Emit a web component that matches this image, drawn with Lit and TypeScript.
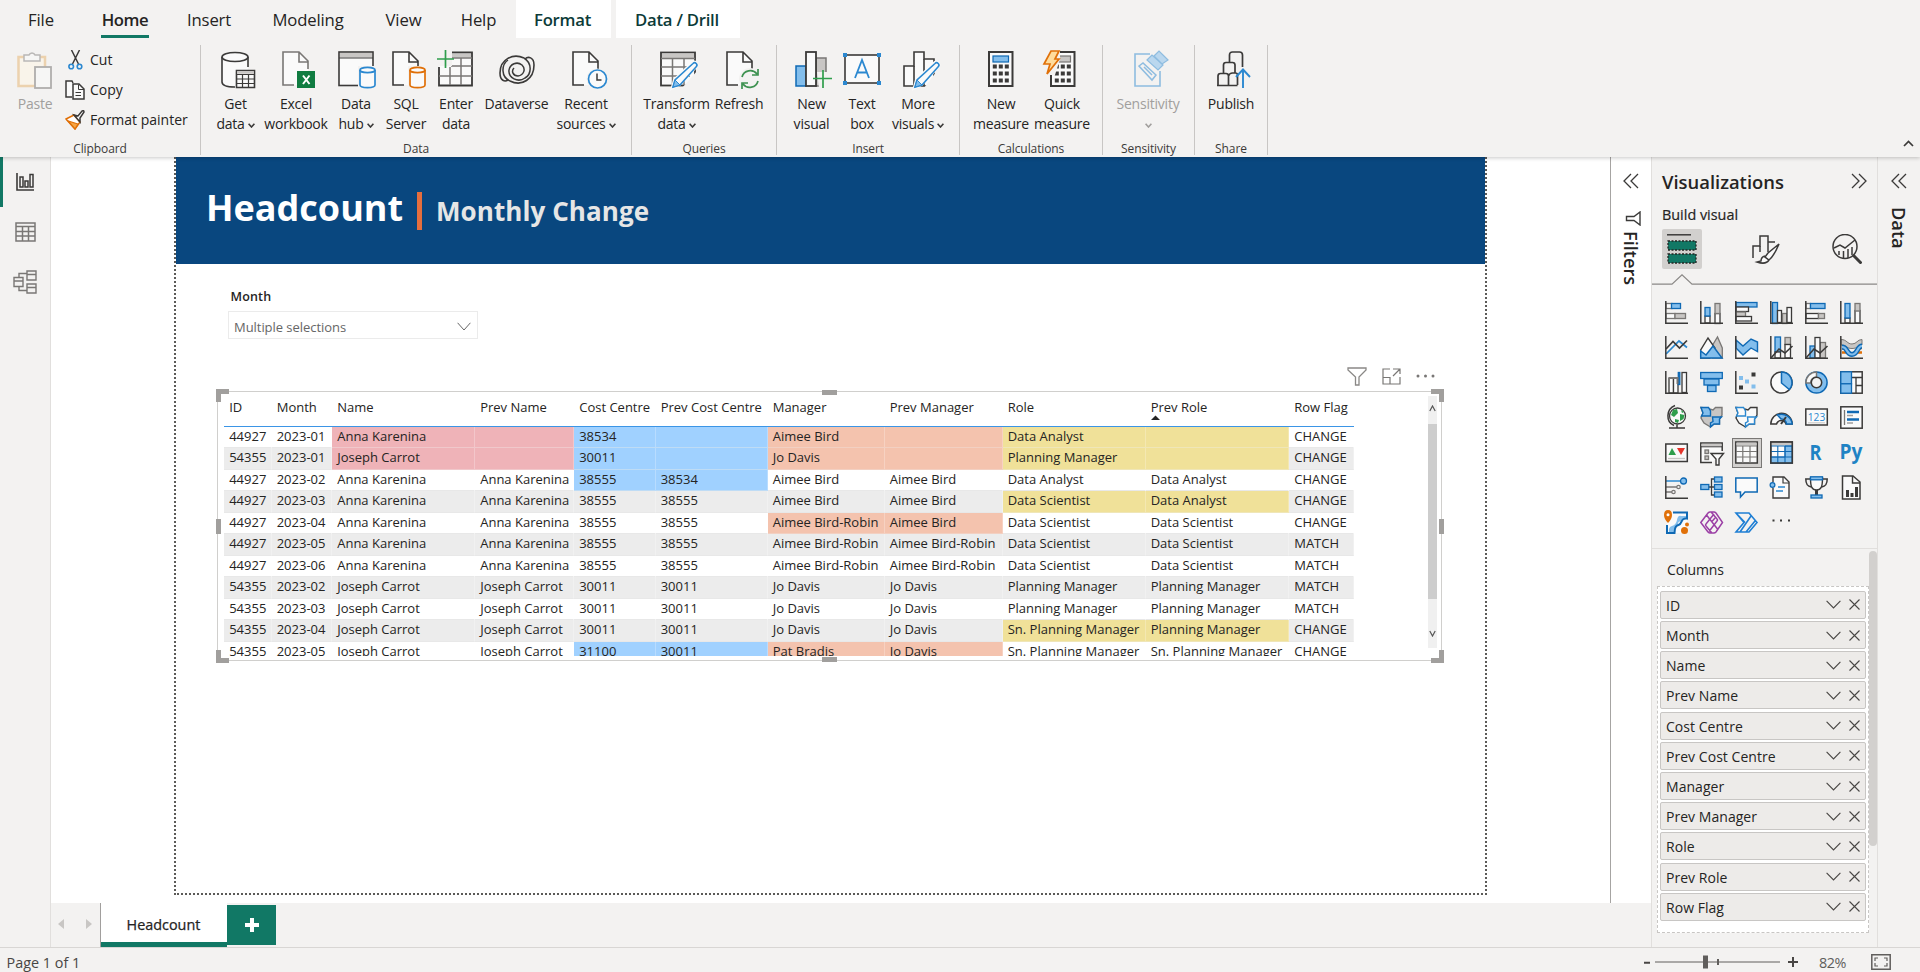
import { LitElement, html, css, svg, TemplateResult } from "lit";
import { customElement } from "lit/decorators.js";
import { classMap } from "lit/directives/class-map.js";
import { styleMap } from "lit/directives/style-map.js";

const D = "#3b3a39";
const B = "#0f69b4";
const BF = "#83beec";
const G = "#797775";
const GF = "#c8c6c4";
const W = "#fafafa";
const LB = "#2b88d0";

type Part = TemplateResult<2>;
const icon = (w: number, h: number, body: Part, vb = `0 0 ${w} ${h}`) =>
  html`<svg width=${w} height=${h} viewBox=${vb} fill="none">${body}</svg>`;

const page = (c = D) => svg`<path d="M1 1H17L26 10V34H1Z" fill="${W}"/><path d="M12 34H1V1H17L26 10V18M17 1V11H26" stroke="${c}" stroke-width="1.6"/>`;
const pencil = svg`<path d="M13 36l2-7L33 12a2.2 2.2 0 0 1 3 3L19 33Z" fill="${W}" stroke="${W}" stroke-width="4"/><path d="M13 36l2-7L33 12.500a2.200 2.200 0 0 1 3.200 3.200L20 34Z" fill="${W}" stroke="${LB}" stroke-width="1.600"/><path d="M13 36l2-7 5 5Z" fill="${BF}" stroke="${LB}"/>`;
const calc = (x: number, c: string, f: string) => svg`<rect x="${x}" y="1" width="23.500" height="34" fill="${W}" stroke="${D}" stroke-width="2"/><rect x="${x + 4}" y="5" width="15.500" height="6" fill="${f}" stroke="${c}" stroke-width="1.200"/>${[13.5, 20.5, 27.5].map(y => [4, 10, 16].map(dx => svg`<rect x="${x + dx - 0.2}" y="${y}" width="4" height="4" fill="${D}"/>`))}`;

const big: Record<string, Part> = {
  paste: svg`<g opacity=".55"><path d="M7 6H1.500V35H19V18H28V6H22" fill="#fff6e6" stroke="#e8b878" stroke-width="2.500"/><path d="M7 4h5a3.200 3.200 0 0 1 6 0h5v6H7Z" fill="${W}" stroke="#8a8886" stroke-width="1.500"/><rect x="18" y="16" width="16" height="21" fill="${W}" stroke="#797775" stroke-width="1.800"/></g>`,
  getdata: svg`<path d="M2 6v25c0 3 6 5 13 5V21h13V6" fill="${W}"/><path d="M15 36C7 36 2 34 2 31V6M28 6V16" stroke="${D}" stroke-width="1.600"/><ellipse cx="15" cy="6" rx="13" ry="4.500" fill="${W}" stroke="${D}" stroke-width="1.600"/><path d="M16.500 19.500H34.500V36.500H16.500Z" fill="${W}" stroke="${D}" stroke-width="1.600"/><path d="M17 21.500H34" stroke="${GF}" stroke-width="2.500"/><path d="M16.500 23.500H34.500M16.500 28H34.500M16.500 32.500H34.500M22.500 23V36M28.500 23V36" stroke="${D}" stroke-width="1.200"/>`,
  excel: svg`<g transform="translate(3 0)">${page(G)}</g><rect x="18" y="20" width="18" height="17" fill="#107c41"/><path d="M24 24.500l6.500 8.500M30.500 24.500l-6.500 8.500" stroke="#fff" stroke-width="2"/>`,
  hub: svg`<rect x="1" y="1" width="34" height="33.500" fill="${W}" stroke="${D}" stroke-width="1.600"/><rect x="2" y="2" width="32" height="4.500" fill="${GF}"/><path d="M1 7H35" stroke="${D}"/><path d="M20 15H38V38H20Z" fill="#f3f2f1"/><path d="M22 19V34c0 3.500 15 3.500 15 0V19" fill="${W}" stroke="${LB}" stroke-width="1.700"/><ellipse cx="29.500" cy="19" rx="7.500" ry="2.700" fill="${W}" stroke="${LB}" stroke-width="1.700"/>`,
  sql: svg`<g transform="translate(1 0)">${page()}</g><path d="M17 15H36V38H17Z" fill="#f3f2f1"/><path d="M19 19V34c0 3.500 15 3.500 15 0V19" fill="${W}" stroke="#e07008" stroke-width="1.700"/><ellipse cx="26.500" cy="19" rx="7.500" ry="2.700" fill="${W}" stroke="#e07008" stroke-width="1.700"/>`,
  enter: svg`<rect x="2" y="2" width="33" height="32.500" fill="${W}"/><path d="M14 1.500H35V34.500H2V16" stroke="${D}" stroke-width="1.800"/><path d="M14 4.500H34" stroke="${GF}" stroke-width="4"/><path d="M14 7H35M14 15H35M2 25H35M13 16V34M24 7V34" stroke="${G}" stroke-width="1.500"/><path d="M0 0H15V15H0Z" fill="#f3f2f1"/><path d="M0 8H17M8.500 -1V17" stroke="#2f9e4c" stroke-width="1.700"/>`,
  dataverse: svg`<path d="M26 7C15 2 2 8 2 22c0 8 5 9 8 7M12 30C24 36 36 28 36 14c0-8-6-9-9-6" stroke="${D}" stroke-width="1.600"/><path d="M26 7c8 5 8 16 1 20-7 5-17 0-16-8 1-6 8-9 13-5 4 4 2 10-4 11-5 0-7-5-4-8M12 30C3 26 3 14 10 9" stroke="${D}" stroke-width="1.500"/>`,
  recent: svg`<g transform="translate(2 0)">${page()}</g><circle cx="27" cy="28" r="10.500" fill="#f3f2f1"/><circle cx="27.500" cy="28" r="9" fill="${W}" stroke="${LB}" stroke-width="1.700"/><path d="M27 22.500V29H31.500" stroke="${D}" stroke-width="1.500"/>`,
  transform: svg`<rect x="1" y="1.500" width="34" height="33" fill="${W}" stroke="${D}" stroke-width="1.800"/><rect x="2" y="2.500" width="32" height="4.500" fill="${GF}"/><path d="M1 7.500H35M1 16H35M1 25H30M12.500 8V34M24 8V34" stroke="${G}" stroke-width="1.500"/><path d="M22 37L37 20V37Z" fill="#f3f2f1"/>${pencil}`,
  refresh: svg`<g transform="translate(2 0)">${page()}</g><circle cx="26" cy="28" r="11" fill="#f3f2f1"/><path d="M18 26a8.500 8.500 0 0 1 15-3M34 30a8.500 8.500 0 0 1-15 3M34 18V24H28M18 38V32H24" stroke="#3d9150" stroke-width="1.700"/>`,
  newvis: svg`<rect x="1" y="15" width="10" height="20" fill="${BF}" stroke="${B}" stroke-width="1.500"/><rect x="21" y="7" width="10" height="28" fill="${GF}" stroke="${G}" stroke-width="1.500"/><rect x="11" y="1" width="10" height="34" fill="${W}" stroke="${D}" stroke-width="1.800"/><path d="M22 21H37V37H24Z" fill="#f3f2f1"/><path d="M18 27.500H37M28 19V37" stroke="#2f9e4c" stroke-width="1.700"/>`,
  textbox: svg`<rect x="2" y="4" width="34" height="28" fill="${W}" stroke="${D}" stroke-width="1.600"/><path d="M12 27L19 9L26 27M14.500 21.500H23.500" stroke="${LB}" stroke-width="1.800"/>${[[0, 2], [34, 2], [0, 30], [34, 30]].map(([x, y]) => svg`<rect x="${x}" y="${y}" width="4" height="4" fill="${LB}"/>`)}`,
  morevis: svg`<path d="M1 35V15H11V1H21V8H31V35Z" fill="${W}" stroke="${D}" stroke-width="1.600"/><path d="M11 15V35M21 8V35" stroke="${D}" stroke-width="1.600"/><path d="M21 37L34 20V37Z" fill="#f3f2f1"/><g transform="translate(-1 0)">${pencil}</g>`,
  calc: calc(7, B, BF),
  quick: svg`${calc(8, G, GF)}<path d="M-1 0H17V8L12 24H-1Z" fill="#f3f2f1"/><path d="M8 0H16L12 8H16L4 23L7 13H1Z" fill="#ffdc9c" stroke="#e07008" stroke-width="1.700"/>`,
  sens: svg`<g opacity=".5"><path d="M20 3H5V35H30V20" stroke="${LB}" stroke-width="1.600"/><path d="M9 15l4-3 13 12-4 5Z M14 16l8 8" stroke="${LB}" stroke-width="1.500"/><path d="M17 9l5-5 11 10-5 5ZM24 5l5-5 9 9-6 4Z" fill="${BF}" stroke="${LB}" stroke-width="1.200"/></g>`,
  publish: svg`<path d="M1 34.500V25q0-2.500 2.500-2.500H9q2.500 0 2.500 2.500V34.500M6.500 22V14q0-2.500 2.500-2.500h6.500q2.500 0 2.500 2.500V22M12.500 11V4q0-3 3-3h7q3 0 3 3V16M0 34.500H20.500M11.500 25q1-3 4-3h3q2 0 2 2V34" stroke="${D}" stroke-width="1.700"/><path d="M26 37V19M19 26l7-7.500 7 7.500" stroke="${LB}" stroke-width="1.900"/>`,
};

const axis = svg`<path d="M.8 0V22.200H23" stroke="${D}" stroke-width="1.500"/>`;
const r = (x: number, y: number, w: number, h: number, f: string, s: string, sw = 1.3) =>
  svg`<rect x="${x}" y="${y}" width="${w}" height="${h}" fill="${f}" stroke="${s}" stroke-width="${sw}"/>`;
const map = (a: string, b: string, sa: string, sb: string) => svg`<path d="M1 1.500L6 2L13 4L15.500 1.500H22V9L19.500 13V18L14 18L10.500 21L4 17L1 12L3 7Z" fill="${b}" stroke="${sb}" stroke-width="1.400"/><path d="M1 1.500H8.500L10.500 5V10H1.500L3 7Z M12.500 11H21.500L19.500 13V18L14 18L10.500 21V17L13 15.500Z" fill="${a}" stroke="${sa}" stroke-width="1.400"/>`;

const viz: Part[] = [
  svg`${r(1, 2.5, 6, 5, W, G)}${r(6.5, 2.5, 9, 5, BF, B)}${r(1, 12.5, 9, 5, W, G)}${r(10, 12.500, 10.500, 5, GF, G)}${axis}`,
  svg`${r(5, 15, 5, 7, W, D)}${r(5, 6.5, 5, 8.5, BF, B)}${r(15, 12.5, 5, 10, W, D)}${r(15, 2.5, 5, 10, GF, G)}${axis}`,
  svg`${r(1, 1.5, 21, 4.500, BF, B)}${r(1, 6, 12.500, 4.500, W, D)}${r(1, 11, 9.500, 4.500, GF, G)}${r(1, 15.5, 15.500, 4.500, W, D)}${axis}`,
  svg`${r(2.500, 1.500, 5, 21, BF, B)}${r(7.500, 9.500, 4, 12, W, D)}${r(12.500, 12.500, 4.500, 10, GF, G)}${r(17, 6.500, 4.500, 15, W, D)}${axis}`,
  svg`${r(1, 2.5, 4.500, 5, W, G)}${r(5.5, 2.5, 14.500, 5, BF, B)}${r(1, 12.5, 12.500, 5, W, D)}${r(13.500, 12.500, 6, 5, GF, G)}${axis}`,
  svg`${r(5, 17, 5, 5, W, D)}${r(5, 2.5, 5, 14.500, BF, B)}${r(15, 9.5, 5, 12.500, W, D)}${r(15, 2.5, 5, 7.500, GF, G)}${axis}`,
  svg`<path d="M1 18L14 5l8 6.500" stroke="${LB}" stroke-width="1.700"/><path d="M1 13l7-7.500 6.500 6.500L22 4.500" stroke="${D}" stroke-width="1.700"/>${axis}`,
  svg`<path d="M12 10L17.500 1L22.300 12V22H12Z" fill="${GF}" stroke="${G}" stroke-width="1.300"/><path d="M.7 22V14L8 2L15 12L10 22Z" fill="${W}" stroke="${D}" stroke-width="1.400"/><path d="M.7 22V15L6 19L13 10L22 22Z" fill="${BF}" stroke="${B}" stroke-width="1.500"/>`,
  svg`<path d="M1 13l5 5 9-8 7 4V22H1Z" fill="${W}"/><path d="M1 4l7 6 8-7L22.500 6V15.500L16 12 8 19 1 12Z" fill="${BF}" stroke="${B}" stroke-width="1.400"/>${axis}`,
  svg`${r(5, 1, 5.500, 15, BF, B)}${r(5, 16, 5.500, 6, W, D)}${r(15, 1.500, 5.500, 7, GF, G)}${r(15, 8.500, 5.500, 13.500, W, D)}<path d="M1 22l8-9 6 4 7.500-7" stroke="${D}" stroke-width="1.600"/>${axis}`,
  svg`${r(5, 10, 5, 12, BF, B)}${r(15, 6.500, 5.500, 15.500, GF, G)}${r(10, 1.500, 5, 20.500, W, D)}<path d="M1 22l8-9 6 4 7.500-7" stroke="${D}" stroke-width="1.600"/>${axis}`,
  svg`<path d="M2 12.500H6.500M2 16.500H7M16 16.500H22M17 12H22" stroke="#e07008" stroke-width="2.500"/><path d="M1 3.500c6 0 6 4.500 11 4.500s5-4.500 10-4.500V9c-5 0-4 3.500-10 3.500S7 9 1 9Z" fill="${GF}" stroke="${G}"/><path d="M2 11c6 0 4 7.500 10 7.500S17 10 22 10" stroke="${B}" stroke-width="5"/><path d="M2 11c6 0 4 7.500 10 7.500S17 10 22 10" stroke="${BF}" stroke-width="2.200"/>${axis}`,
  svg`${r(4, 7, 4.500, 15, W, D)}${r(8.500, 7, 4, 7, "#8a8886", "#8a8886", 0)}${r(8.500, 7, 4.500, 15, W, D)}${r(13.300, 1.500, 1.500, 12, B, B)}${r(17, 1.500, 4.500, 20, W, D)}<path d="M4 7H12.500V13" stroke="${G}" stroke-width="2"/>${axis}`,
  svg`${r(.7, 1.500, 21.600, 6, BF, B)}${r(4, 8, 15, 6, BF, B)}${r(7.500, 14.500, 8.500, 6, BF, B)}`,
  svg`${r(4.500, 5.500, 3, 3, BF, BF, 1)}${r(10.500, 9, 3, 3, BF, BF, 1)}${r(17, 14, 3, 3, BF, BF, 1)}${r(17, 2, 3, 3, D, D, 1)}${r(4.500, 15, 3, 3, D, D, 1)}${axis}`,
  svg`<circle cx="11.500" cy="11.500" r="10.600" fill="${W}" stroke="${D}" stroke-width="1.500"/><path d="M11.500 .9a10.600 10.600 0 0 1 7.800 17.600L11.500 12Z" fill="${BF}" stroke="${B}" stroke-width="1.500"/>`,
  svg`<circle cx="11.500" cy="11.500" r="10.600" fill="${BF}" stroke="${B}" stroke-width="1.500"/><path d="M11.500 .9A10.600 10.600 0 0 0 .9 12H5.500a6 6 0 0 1 6-6Z" fill="${W}" stroke="${G}" stroke-width="1.500"/><circle cx="11.500" cy="11.500" r="5.200" fill="#f3f2f1" stroke="${D}" stroke-width="1.500"/>`,
  svg`${r(.8, .8, 21.400, 21.400, W, D, 1.500)}<path d="M11.500 6.500H22M16 6.500V22M16 14.500H22" stroke="${D}" stroke-width="1.300"/>${r(.8, .8, 10.700, 12, BF, B)}${r(.8, 12.800, 10.700, 9.400, BF, B)}`,
  svg`<circle cx="12.500" cy="10" r="8" fill="${W}" stroke="${D}" stroke-width="1.300"/><path d="M8 4l4-1 1 4-4 4-3-2ZM15 8l4.500 1-1 4-3.500 2ZM10 13l4 1-1 3-3-1Z M16 4l3 2-2 1Z" fill="#2f9e4c"/><path d="M10 -.5C1 3 .5 16 9 19.500M4 22H20M12 18.500V22" stroke="${D}" stroke-width="1.500"/>`,
  map(BF, GF, B, G),
  map(W, W, LB, D),
  svg`<path d="M.8 18A10.700 10.700 0 0 1 22.200 18H16A5 5 0 0 0 6.500 18Z" fill="${W}" stroke="${D}" stroke-width="1.500"/><path d="M7.500 9A10.700 10.700 0 0 1 22.200 18H16.500A5 5 0 0 0 11 13Z" fill="${BF}" stroke="${B}" stroke-width="1.500"/><path d="M11 18L16 11" stroke="${D}" stroke-width="2"/>`,
  svg`${r(.8, 3, 21.500, 16, W, D, 1.500)}<text x="11.500" y="14.800" text-anchor="middle" font-size="11.500" fill="${LB}" font-family="Open Sans, sans-serif" textLength="17.500" lengthAdjust="spacingAndGlyphs">123</text><path d="M3 16.800H20" stroke="${GF}"/>`,
  svg`${r(.8, .8, 21.400, 21.400, W, D, 1.500)}<path d="M4.500 4V19" stroke="${G}" stroke-width="1.300"/><path d="M7 6H19M7 13.500H19" stroke="${B}" stroke-width="2.600"/><path d="M7 9.500H13M7 17H13" stroke="#a19f9d" stroke-width="1.500"/>`,
  svg`${r(.8, 3, 21.500, 17.500, W, D, 1.500)}<path d="M3.500 14L7 7l4 7Z" fill="#2f9e4c"/><path d="M12 7h8l-4 7Z" fill="#e5352b"/><path d="M3 17.500H20" stroke="${GF}" stroke-width="1.300"/>`,
  svg`<path d="M12 21.500H.8V2H22.200V10" fill="${W}" stroke="${D}" stroke-width="1.500"/><path d="M1.500 4H21.500" stroke="${GF}" stroke-width="2.500"/><path d="M1 5.800H22" stroke="${D}"/>${r(5, 9, 3.500, 3.500, GF, G)}${r(5, 15, 3.500, 3.500, GF, G)}<path d="M11 12.500H23.500L19 18V24H16V18Z" fill="${W}" stroke="${D}" stroke-width="1.400"/>`,
  svg`${r(.8, 1, 21.500, 21, W, D, 1.500)}<path d="M1.500 3H21.500" stroke="${GF}" stroke-width="3"/><path d="M1 5H22M1 10.500H22M1 16H22M7.800 5V22M15 5V22" stroke="${G}" stroke-width="1.200"/>`,
  svg`${r(.8, 1, 21.500, 21, W, D, 1.500)}<path d="M1.500 3H21.500" stroke="${GF}" stroke-width="3"/><path d="M15 5H22V22H1V16H15Z" fill="${BF}" stroke="${B}"/><path d="M1 5H22M1 10.500H22M1 16H22M7.800 5V22M15 5V22" stroke="${B}" stroke-width="1.100"/>${r(.8, 1, 21.500, 21, "none", D, 1.500)}`,
  svg`<text x="10.500" y="19" text-anchor="middle" font-size="21" font-weight="700" fill="#1f83c4" font-family="Open Sans, sans-serif" textLength="12" lengthAdjust="spacingAndGlyphs">R</text>`,
  svg`<text x="11" y="17.500" text-anchor="middle" font-size="22" font-weight="700" fill="#1f83c4" font-family="Open Sans, sans-serif" textLength="23" lengthAdjust="spacingAndGlyphs">Py</text>`,
  svg`<path d="M1 5H16" stroke="${LB}" stroke-width="1.500"/><circle cx="18.500" cy="5" r="3" fill="${BF}" stroke="${B}" stroke-width="1.300"/><path d="M1 11H12M1 16H7" stroke="${G}" stroke-width="1.300"/><circle cx="13.500" cy="11" r="1.700" stroke="${G}" stroke-width="1.200"/><circle cx="8.500" cy="16" r="1.700" stroke="${G}" stroke-width="1.200"/>${axis}`,
  svg`<path d="M8 11H14M14 3H11.500V19H14" stroke="${D}" stroke-width="1.300"/>${r(.8, 8.500, 8, 5, BF, B)}${r(14.500, 1, 7.500, 5, BF, B)}${r(14.500, 8.500, 7.500, 5, BF, B)}${r(14.500, 16, 7.500, 5, BF, B)}`,
  svg`<path d="M.8 2H22.200V16H10L5.500 21V16H.8Z" fill="${W}" stroke="${B}" stroke-width="1.500"/>`,
  svg`<path d="M3 6V1H14L19 6V22H3V12" fill="${W}" stroke="${D}" stroke-width="1.400"/><path d="M13 1V7H19" stroke="${D}" stroke-width="1.200"/><circle cx="2.500" cy="9" r="2.400" fill="${BF}" stroke="${B}" stroke-width="1.200"/><path d="M8 11H15M6 15H13" stroke="${LB}" stroke-width="1.500"/>`,
  svg`<path d="M5.500 3H.8c0 6 2 7.500 5.500 8M17.500 3H22.200c0 6-2 7.500-5.500 8" stroke="${D}" stroke-width="1.500"/><path d="M5.500 2H17.500C17.500 11 16 14 11.500 14S5.500 11 5.500 2Z" fill="${W}" stroke="${D}" stroke-width="1.400"/>${r(5.500, .8, 12, 3, BF, B)}<path d="M11.500 14V19" stroke="${D}" stroke-width="3"/>${r(6, 19, 11, 3, BF, B)}`,
  svg`<path d="M2.500 0H13L20 6V23H2.500Z" fill="${W}" stroke="${D}" stroke-width="1.500"/><path d="M12.500 0V7H20" stroke="${D}" stroke-width="1.400"/><path d="M6 14h3v7H6ZM10.500 17h3v4h-3ZM15 11h3V21h-3Z" fill="${D}"/>`,
  svg`<path d="M2 2H22V22H2Z" fill="${W}"/><path d="M18 8c0 3-5 1-5 5s-5 2-4 9H4q-1-6 3-7t5-6 4-4h6v3Z" fill="${BF}"/><path d="M8 1.500H22V7.500C15 6.500 18 13 13.500 14S10 19 9.500 22H2V14" stroke="${B}" stroke-width="2"/><path d="M-1 4Q-1-1 3-1T7 4Q7 8 3 12Q-1 8-1 4Z" fill="#e07008"/><circle cx="3" cy="3.700" r="1.500" fill="#fff"/><circle cx="19.500" cy="19.500" r="3.500" fill="#e07008"/><circle cx="22" cy="13.500" r="2" fill="#e07008"/>`,
  svg`<path d="M.8 11.500L8 2q1-1 2-1h4q1 0 2 1l6.500 9.500L16 21q-1 1-2 1H10q-1 0-2-1Z M11.500 1.500L17 8q1 1 0 2L9 20.500M11.500 21.500L6 15q-1-1 0-2L14 3M6.500 4l11 14M11.500 11l3.500-4" stroke="#9b3fa5" stroke-width="1.500"/>`,
  svg`<path d="M1 2H14L22 11.500 14 21H1L9 11.500ZM1 2l9 9.500M5 21L16 5M11 21l9-11" stroke="#1f7fd4" stroke-width="1.600"/>`,
  svg`<path d="M2.500 9.500h2M10 9.500h2M18 9.500h2" stroke="${D}" stroke-width="2"/>`,
];

const chev = (w: number, h: number, c = D, sw = 1.2) =>
  icon(w, h, svg`<path d="M.6 .8L${w / 2} ${h - 1}L${w - .6} .8" stroke="${c}" stroke-width="${sw}"/>`);

interface Tool { i: string; a: string; b?: string; w: number; drop?: boolean; off?: boolean; dx?: number }
interface Group { name: string; w: number; pad: number; tools: Tool[] }

const groups: Group[] = [
  { name: "Data", w: 431, pad: 9.5, tools: [
    { i: "getdata", a: "Get", b: "data", w: 50, drop: true, dx: 6 },
    { i: "excel", a: "Excel", b: "workbook", w: 71, dx: 4 },
    { i: "hub", a: "Data", b: "hub", w: 49, drop: true, dx: 2 },
    { i: "sql", a: "SQL", b: "Server", w: 51, dx: 7 },
    { i: "enter", a: "Enter", b: "data", w: 49 },
    { i: "dataverse", a: "Dataverse", w: 72 },
    { i: "recent", a: "Recent", b: "sources", w: 67, drop: true, dx: 6 } ] },
  { name: "Queries", w: 145, pad: 10, tools: [
    { i: "transform", a: "Transform", b: "data", w: 69, drop: true, dx: 4 },
    { i: "refresh", a: "Refresh", w: 56, dx: 7 } ] },
  { name: "Insert", w: 183, pad: 11, tools: [
    { i: "newvis", a: "New", b: "visual", w: 47, dx: 5 },
    { i: "textbox", a: "Text", b: "box", w: 54, dx: 0 },
    { i: "morevis", a: "More", b: "visuals", w: 58, drop: true, dx: 7 } ] },
  { name: "Calculations", w: 143, pad: 10, tools: [
    { i: "calc", a: "New", b: "measure", w: 62 },
    { i: "quick", a: "Quick", b: "measure", w: 60, dx: 0 } ] },
  { name: "Sensitivity", w: 92, pad: 10, tools: [{ i: "sens", a: "Sensitivity", b: "", w: 70, drop: true, off: true, dx: 1 }] },
  { name: "Share", w: 73, pad: 10, tools: [{ i: "publish", a: "Publish", w: 52, dx: 9 }] },
];

@customElement("ribbon-bar")
class RibbonBar extends LitElement {
  static styles = css`
    :host { display: flex; flex-direction: column; height: 157px; background: #f3f2f1; color: #252423; position: relative; z-index: 2; box-shadow: 0 1px 4px rgba(0, 0, 0, .22); }
    .tabs { display: flex; height: 38px; font-size: 16.7px; line-height: 40px; }
    .tab { box-sizing: border-box; text-align: center; height: 38px; white-space: nowrap; letter-spacing: -.15px; }
    .on { font-weight: 600; box-shadow: inset 0 -3px #117865; letter-spacing: -.4px; }
    .ctx { background: #fff; font-weight: 600; color: #0c3b38; letter-spacing: -.25px; padding-right: 2px; }
    .groups { display: flex; height: 119px; box-sizing: border-box; padding-top: 7px; }
    .group { box-sizing: border-box; height: 110px; border-right: 1px solid #c8c6c4; display: flex; flex-direction: column; }
    .tools { display: flex; height: 94px; flex: none; }
    .tool { display: flex; flex-direction: column; align-items: center; white-space: nowrap; font-size: 14px; line-height: 20px; letter-spacing: -.22px; padding-top: 6px; box-sizing: border-box; }
    .pic { height: 43px; display: flex; }
    .pic svg { overflow: visible; }
    .off { color: #a19f9d; }
    .line { display: flex; align-items: center; gap: 3px; min-height: 20px; }
    .line svg { margin-top: 2px; }
    .name { text-align: center; font-size: 12px; line-height: 16px; height: 16px; letter-spacing: -.1px; padding-top: 1.5px; color: #3b3a39; box-sizing: content-box; margin-bottom: -4px; }
    .clip { padding-left: 17px; display: flex; gap: 12px; height: 94px; flex: none; }
    .small { display: flex; flex-direction: column; }
    .cmd { display: flex; align-items: center; height: 30px; font-size: 14px; line-height: 28px; gap: 5px; letter-spacing: 0; box-sizing: border-box; }
    .cmd .g { width: 20px; display: flex; justify-content: center; }
    .fold { margin-left: auto; align-self: flex-end; padding: 0 6px 5px 0; }
  `;
  render() {
    const tabs: [string, number, number, string][] = [["File", 27, 28, ""], ["Home", 46, 48, "on"], ["Insert", 38, 43, ""], ["Modeling", 41, 74, ""], ["View", 39, 39, ""], ["Help", 37, 37, ""], ["Format", 19, 95, "ctx"], ["Data / Drill", 5, 124, "ctx"]];
    return html`
      <div class="tabs">${tabs.map(([t, m, w, k]) => html`<div class="tab ${k}" style=${styleMap({ marginLeft: m + "px", width: w + "px" })}>${t}</div>`)}</div>
      <div class="groups">
        <div class="group" style="width:201px">
          <div class="clip">
            <div class="tool off"><div class="pic">${icon(36, 38, big.paste)}</div><div>Paste</div></div>
            <div class="small">
              <div class="cmd"><span class="g">${icon(15, 20, svg`<path d="M3.500 0l7 14M11.500 0L4.500 14" stroke="${D}" stroke-width="1.500"/><circle cx="3.200" cy="16.500" r="2.300" stroke="${LB}" stroke-width="1.600"/><circle cx="11.500" cy="16.500" r="2.300" stroke="${LB}" stroke-width="1.600"/>`)}</span>Cut</div>
              <div class="cmd"><span class="g">${icon(20, 20, svg`<path d="M7 17H1V1H7L8 3" fill="${W}" stroke="${D}" stroke-width="1.500"/><path d="M8 4H14L19 9V19H8Z" fill="${W}" stroke="${D}" stroke-width="1.500"/><path d="M13.500 4.500V9.500H19M10.500 12.500H16M10.500 15.500H16" stroke="${D}"/>`)}</span>Copy</div>
              <div class="cmd"><span class="g">${icon(20, 20, svg`<path d="M1 9l8-4 6 7-5 7Z" fill="#fff" stroke="#e07008" stroke-width="1.500"/><path d="M3 11l7 8 3-5Z" fill="#f7a543" stroke="#e07008" stroke-width="1.200"/><path d="M9 5l4 1 4-5q2-1 2 1l-4 6v4Z" fill="${W}" stroke="${D}" stroke-width="1.500"/>`)}</span>Format painter</div>
            </div>
          </div>
          <div class="name">Clipboard</div>
        </div>
        ${groups.map(g => html`<div class="group" style=${styleMap({ width: g.w + "px" })}>
          <div class="tools" style=${styleMap({ paddingLeft: g.pad + "px" })}>
            ${g.tools.map(t => html`<div class=${classMap({ tool: true, off: !!t.off })} style=${styleMap({ width: t.w + "px" })}>
              <div class="pic" style=${styleMap({ paddingLeft: (t.dx ?? 0) + "px" })}>${icon(38, 38, big[t.i])}</div>
              <div>${t.a}</div>
              <div class="line">${t.b}${t.drop ? chev(7, 5, t.off ? "#a19f9d" : D, 1.6) : ""}</div>
            </div>`)}
          </div>
          <div class="name">${g.name}</div>
        </div>`)}
        <div class="fold">${icon(11, 7, svg`<path d="M1 6L5.500 1.500L10 6" stroke="${D}" stroke-width="1.700"/>`)}</div>
      </div>`;
  }
}

const cols = ["ID", "Month", "Name", "Prev Name", "Cost Centre", "Prev Cost Centre", "Manager", "Prev Manager", "Role", "Prev Role", "Row Flag"];
const A = "Anna Karenina", J = "Joseph Carrot", AB = "Aimee Bird", AR = "Aimee Bird-Robin", JD = "Jo Davis";
const DA = "Data Analyst", DS = "Data Scientist", PM = "Planning Manager", SP = "Sn. Planning Manager";
/* Second element: highlighted groups, n = name, c = cost centre, m = manager, r = role */
const rows: [string[], string][] = [
  [["44927", "2023-01", A, "", "38534", "", AB, "", DA, "", "CHANGE"], "ncmr"],
  [["54355", "2023-01", J, "", "30011", "", JD, "", PM, "", "CHANGE"], "ncmr"],
  [["44927", "2023-02", A, A, "38555", "38534", AB, AB, DA, DA, "CHANGE"], "c"],
  [["44927", "2023-03", A, A, "38555", "38555", AB, AB, DS, DA, "CHANGE"], "r"],
  [["44927", "2023-04", A, A, "38555", "38555", AR, AB, DS, DS, "CHANGE"], "m"],
  [["44927", "2023-05", A, A, "38555", "38555", AR, AR, DS, DS, "MATCH"], ""],
  [["44927", "2023-06", A, A, "38555", "38555", AR, AR, DS, DS, "MATCH"], ""],
  [["54355", "2023-02", J, J, "30011", "30011", JD, JD, PM, PM, "MATCH"], ""],
  [["54355", "2023-03", J, J, "30011", "30011", JD, JD, PM, PM, "MATCH"], ""],
  [["54355", "2023-04", J, J, "30011", "30011", JD, JD, SP, PM, "CHANGE"], "r"],
  [["54355", "2023-05", J, J, "31100", "30011", "Pat Bradis", JD, SP, SP, "CHANGE"], "cm"],
];
const kind = ["", "", "n", "n", "c", "c", "m", "m", "r", "r", ""];

@customElement("report-page")
class ReportPage extends LitElement {
  static styles = css`
    :host { display: block; background: #fff; flex: 1; padding-left: 123px; overflow: hidden; }
    .page { box-sizing: border-box; width: 1313px; height: 738px; border: 2px dotted #5b5a58; border-top: 0; }
    .banner { height: 107px; background: #09477f; display: flex; box-sizing: border-box; padding-left: 30px; white-space: nowrap; }
    .h1 { color: #fff; font-weight: 700; font-size: 36px; line-height: 50px; padding-top: 26px; letter-spacing: 0; width: 211px; }
    .bar { width: 5px; height: 38px; background: #e56e3e; margin-top: 35px; }
    .h2 { color: #e6e6e6; font-weight: 700; font-size: 26px; line-height: 40px; padding: 34px 0 0 14px; letter-spacing: .08px; }
    .slicer { padding: 23px 0 0 52px; width: 250px; color: #252423; }
    .slicer .t { font-size: 12.5px; font-weight: 600; line-height: 20px; padding-left: 2.5px; letter-spacing: .15px; }
    .combo { margin-top: 4px; box-sizing: border-box; height: 28px; border: 1px solid #ebebeb; display: flex; align-items: center; justify-content: space-between; padding: 3px 6px 0 5px; font-size: 13px; letter-spacing: -.05px; color: #666; }
    .actions { display: flex; justify-content: flex-end; align-items: center; gap: 15px; height: 20px; padding: 27px 50px 0 0; }
    .visual { position: relative; margin: 5px 0 0 41px; width: 1225px; height: 270px; box-sizing: border-box; border: 1px solid #d0cfcd; border-radius: 1px; display: flex; justify-content: space-between; padding: 4px 4px 4px 6px; }
    .table { height: 260px; overflow: hidden; font-size: 13px; color: #252423; }
    .row, .head { display: grid; grid-template-columns: 47.5px 60.5px 143px 99px 81.500px 112px 117px 118px 143px 143.500px 65px; }
    .head { height: 29.5px; border-bottom: 1.5px solid #3b95e6; line-height: 23px; }
    .head div { padding-left: 5.2px; white-space: nowrap; position: relative; }
    .sort { position: absolute; left: 5px; top: 19px; display: flex; }
    .row { height: 21.5px; }
    .cell { box-sizing: border-box; padding-left: 5.2px; line-height: 19px; white-space: nowrap; border-bottom: 1px solid #e8e8e8; border-right: 1px solid rgba(255, 255, 255, .25); }
    .alt { background: #ececec; }
    .n { background: #efb3b8; border-bottom-color: #f0c8cb; }
    .c { background: #a0d1ff; border-bottom-color: #bfdcf5; }
    .m { background: #f4c3ae; border-bottom-color: #f2d0c2; }
    .r { background: #f0e199; border-bottom-color: #efe6b8; }
    .scroll { width: 9px; height: 252px; background: #f0f0f0; display: flex; flex-direction: column; align-items: center; }
    .thumb { width: 9px; height: 175px; background: #cdcdcd; }
    .up { height: 28px; padding-top: 9px; box-sizing: border-box; line-height: 0; }
    .down { padding-top: 31px; line-height: 0; }
    .hd { position: absolute; background: #a19f9d; }
    .co { position: absolute; width: 13px; height: 13px; box-sizing: border-box; border: 0 solid #a19f9d; }
    .tl { left: -2px; top: -3px; border-width: 5px 0 0 5px; }
    .tr { right: -3px; top: -3px; border-width: 5px 5px 0 0; }
    .bl { left: -2px; bottom: -3px; border-width: 0 0 5px 5px; }
    .br { right: -3px; bottom: -3px; border-width: 0 5px 5px 0; }
    .ht { left: 604px; top: -2px; width: 15px; height: 5px; }
    .hb { left: 604px; bottom: -2px; width: 15px; height: 5px; }
    .hl { left: -2px; top: 127px; width: 5px; height: 15px; }
    .hr { right: -3px; top: 127px; width: 5px; height: 15px; }
  `;
  render() {
    return html`<div class="page">
      <div class="banner"><div class="h1">Headcount</div><div class="bar"></div><div class="h2">Monthly Change</div></div>
      <div class="slicer"><div class="t">Month</div><div class="combo">Multiple selections${chev(14, 9, "#666", 1)}</div></div>
      <div class="actions">
        ${icon(20, 19, svg`<path d="M1 1H19V3L12 10V18H8.500V10L1 3Z" stroke="#8a8886" stroke-width="1.300"/>`)}
        ${icon(19, 17, svg`<path d="M8 1H1V16H18V9M1 9.500H8V16M11 1H18V6M18 1L11 8" stroke="#797775" stroke-width="1.200"/>`)}
        ${icon(19, 5, svg`<circle cx="2" cy="2" r="1.500" fill="#797775"/><circle cx="9.500" cy="2" r="1.500" fill="#797775"/><circle cx="17" cy="2" r="1.500" fill="#797775"/>`)}
      </div>
      <div class="visual">
        <div class="table">
          <div class="head">${cols.map(c => html`<div>${c}${c === "Prev Role" ? html`<span class="sort">${icon(9, 5, svg`<path d="M0 5L4.500 .5L9 5Z" fill="#252423"/>`)}</span>` : ""}</div>`)}</div>
          ${rows.map(([cells, hl], i) => html`<div class="row">${cells.map((c, k) => {
            const on = kind[k] && hl.includes(kind[k]);
            return html`<div class="cell ${on ? kind[k] : i % 2 ? "alt" : ""}">${c}</div>`;
          })}</div>`)}
        </div>
        <div class="scroll"><div class="up">${icon(7, 7, svg`<path d="M.8 6L3.500 1L6.200 6" stroke="#555" stroke-width="1.200"/>`)}</div><div class="thumb"></div><div class="down">${icon(7, 7, svg`<path d="M.8 1L3.500 6L6.200 1" stroke="#555" stroke-width="1.200"/>`)}</div></div>
        <i class="co tl"></i><i class="co tr"></i><i class="co bl"></i><i class="co br"></i>
        <i class="hd ht"></i><i class="hd hb"></i><i class="hd hl"></i><i class="hd hr"></i>
      </div>
    </div>`;
  }
}

@customElement("viz-pane")
class VizPane extends LitElement {
  static styles = css`
    :host { box-sizing: border-box; width: 227px; flex: none; border-left: 1px solid #e1dfdd; border-right: 1px solid #e1dfdd; background: #f3f2f1; color: #252423; display: flex; flex-direction: column; }
    .top { display: flex; justify-content: space-between; align-items: center; height: 26px; padding: 11px 10px 0 10px; font-size: 18.4px; font-weight: 600; }
    .sub { font-size: 14.4px; line-height: 20px; padding: 10.5px 0 0 10px; -webkit-text-stroke: .2px #252423; }
    .modes { display: flex; justify-content: space-between; padding: 4.5px 15px 0 10px; height: 40px; align-items: center; }
    .tile { width: 40px; height: 40px; background: #d2d0ce; border-radius: 2px; display: flex; align-items: center; justify-content: center; }
    .rule { height: 11px; margin-top: 5px; display: flex; }
    .icons { display: grid; grid-template-columns: repeat(6, 35px); grid-auto-rows: 35px; padding: 10px 0 0 7px; height: 263.5px; box-sizing: border-box; place-items: center; border-bottom: 1px solid #e1dfdd; }
    .v { width: 28px; height: 28px; border: 1px solid transparent; display: flex; align-items: center; justify-content: center; }
    .v svg { overflow: visible; }
    .sel { background: #d2d0ce; border-color: #797775; }
    .wells { display: flex; flex: 1; justify-content: space-between; padding: 2px 0 0 5px; }
    .cap { font-size: 14px; line-height: 20px; padding: 9px 0 6px 10px; letter-spacing: -.1px; }
    .box { width: 212px; height: 347px; box-sizing: border-box; border: 1px dashed #c8c6c4; background: #fff; padding: 4.4px 2px 4px; display: flex; flex-direction: column; gap: 2.2px; }
    .f { box-sizing: border-box; height: 28px; border: 1px solid #c8c6c4; border-radius: 2px; background: #edebe9; display: flex; align-items: center; padding: 0 5px; font-size: 14px; gap: 8px; }
    .f span { flex: 1; padding-top: 1px; letter-spacing: .04px; }
    .bar { width: 8px; height: 295px; border-radius: 4px; background: #d2d0ce; }
  `;
  render() {
    return html`
      <div class="top">Visualizations${icon(16, 16, svg`<path d="M1 1l7 7-7 7M8 1l7 7-7 7" stroke="${D}" stroke-width="1.300"/>`)}</div>
      <div class="sub">Build visual</div>
      <div class="modes">
        <div class="tile">${icon(30, 30, svg`<path d="M0 .8H24" stroke="${D}" stroke-width="1.500"/><rect x="1" y="7" width="28" height="9" fill="#117865" stroke="#252423" stroke-width="1.300" stroke-dasharray="2 1.500"/><rect x="1" y="20" width="28" height="9" fill="#117865" stroke="#252423" stroke-width="1.300" stroke-dasharray="2 1.500"/>`)}</div>
        ${icon(30, 30, svg`<path d="M1 24V12H8V2H16V18M16 8H23" stroke="${D}" stroke-width="1.500"/><path d="M8 12V18" stroke="${D}" stroke-width="1.500"/><path d="M27 10L16 19 13 23l4 3Q22 22 27 10ZM13 22q-4 1-4 5l-4 1q9 3 12-2" fill="${W}" stroke="${D}" stroke-width="1.500"/>`)}
        ${icon(30, 30, svg`<circle cx="13" cy="12.500" r="12" stroke="${D}" stroke-width="1.500"/><path d="M2 14L8 11l5 3 10-8M7 17v4M11.500 17v7M16 15v9M20 13v8" stroke="${D}" stroke-width="1.500"/><path d="M21 21l8.500 8.500" stroke="${D}" stroke-width="3"/>`)}
      </div>
      <div class="rule">${icon(225, 11, svg`<path d="M0 10.200H20L30 .8L40 10.200H225" stroke="#8a8886" stroke-width="1.200"/>`)}</div>
      <div class="icons">${viz.map((v, i) => html`<div class=${classMap({ v: true, sel: i === 26 })}>${icon(23, 23, v)}</div>`)}</div>
      <div class="wells">
        <div><div class="cap">Columns</div><div class="box">${cols.map(c => html`<div class="f"><span>${c}</span>${chev(15, 9, "#484644", 1.1)}${icon(11, 11, svg`<path d="M.5 .5l10 10M10.500 .5l-10 10" stroke="#484644" stroke-width="1.100"/>`)}</div>`)}</div></div>
        <div class="bar"></div>
      </div>`;
  }
}

@customElement("app-root")
class AppRoot extends LitElement {
  static styles = css`
    :host { display: flex; flex-direction: column; width: 1920px; height: 972px; overflow: hidden; font-family: "Open Sans", "Noto Sans", sans-serif; background: #f3f2f1; color: #252423; }
    .body { display: flex; height: 790px; }
    .rail { width: 51px; flex: none; box-sizing: border-box; border-right: 1px solid #e1dfdd; display: flex; flex-direction: column; }
    .nav { height: 50px; box-sizing: border-box; display: flex; align-items: center; justify-content: center; border-left: 3px solid transparent; padding-right: 3px; }
    .cur { border-left-color: #117865; }
    .center { flex: 1; min-width: 0; display: flex; flex-direction: column; }
    .stage { display: flex; height: 746px; }
    .side { width: 40px; flex: none; border-left: 1px solid #a6a4a2; background: #fff; display: flex; flex-direction: column; align-items: center; padding-top: 16px; height: 730px; }
    .side svg { margin-right: 1px; }
    .side .fun { margin: 0 0 0 4px; }
    .gap { height: 20px; }
    .gap2 { height: 10px; }
    .gap3 { height: 18px; }
    .vert { writing-mode: vertical-rl; font-size: 18.2px; font-weight: 600; line-height: 22px; }
    .pages { height: 44px; display: flex; }
    .arrows { width: 50px; box-sizing: border-box; border-right: 1px solid #a19f9d; display: flex; align-items: center; justify-content: space-between; padding: 0 8px 2px 7px; }
    .ptab { width: 126px; box-sizing: border-box; background: #fff; border-bottom: 5px solid #117865; text-align: center; font-size: 14.400px; line-height: 43px; padding-right: 1px; -webkit-text-stroke: .25px #252423; }
    .add { width: 49px; height: 40px; margin-top: 2px; background: #117865; display: flex; align-items: center; justify-content: center; }
    .data { width: 42px; flex: none; display: flex; flex-direction: column; align-items: center; padding-top: 16px; box-sizing: border-box; }
    .status { height: 25px; box-sizing: border-box; border-top: 1px solid #d8d6d4; display: flex; align-items: center; font-size: 14.4px; color: #484644; padding: 4px 29px 0 6.5px; }
    .zoom { margin-left: auto; display: flex; align-items: center; height: 20px; }
    .pct { width: 52px; padding-left: 20px; box-sizing: border-box; margin-right: 20px; letter-spacing: -.5px; color: #605e5c; }
  `;
  render() {
    const dbl = () => icon(16, 16, svg`<path d="M8 1L1 8l7 7M15 1L8 8l7 7" stroke="${D}" stroke-width="1.300"/>`);
    return html`
      <ribbon-bar></ribbon-bar>
      <div class="body">
        <div class="rail">
          <div class="nav cur">${icon(18, 18, svg`<path d="M1 0V17H18" stroke="${D}" stroke-width="1.600"/><path d="M4 4H7V14H4ZM9 8H12V14H9ZM14 1.500H17V14H14Z" stroke="${D}" stroke-width="1.500"/>`)}</div>
          <div class="nav">${icon(21, 20, svg`<path d="M1 1H20V19H1ZM1 4.500H20M1 9.500H20M1 14H20M7.500 4V19M13.500 4V19" stroke="#797775" stroke-width="1.500"/>`)}</div>
          <div class="nav">${icon(24, 24, svg`<path d="M1 7.500H10V16.500H1ZM14 1H23V10H14ZM14 14H23V23H14ZM1 11H10M14 4.500H23M14 17.500H23M6 7V3.500H14M6 17V20.500H14" stroke="#797775" stroke-width="1.400"/>`)}</div>
        </div>
        <div class="center">
          <div class="stage">
            <report-page></report-page>
            <div class="side">${dbl()}<div class="gap"></div><div class="fun">${icon(16, 15, svg`<path d="M15 1V14L9 9.500H1.500V5.500H9Z" stroke="${D}" stroke-width="1.400"/>`)}</div><div class="vert">Filters</div></div>
          </div>
          <div class="pages">
            <div class="arrows">${icon(6, 10, svg`<path d="M6 0V10L0 5Z" fill="#c8c6c4"/>`)}${icon(6, 10, svg`<path d="M0 0V10L6 5Z" fill="#c8c6c4"/>`)}</div>
            <div class="ptab">Headcount</div>
            <div class="add">${icon(14, 14, svg`<path d="M7 0V14M0 7H14" stroke="#fff" stroke-width="4"/>`)}</div>
          </div>
        </div>
        <viz-pane></viz-pane>
        <div class="data">${dbl()}<div class="gap3"></div><div class="vert">Data</div></div>
      </div>
      <div class="status"><span>Page 1 of 1</span>
        <div class="zoom">${icon(155, 14, svg`<path d="M0 7.800H6M144 7H154M149 2V12" stroke="#484644" stroke-width="2"/><path d="M11 7H136" stroke="#605e5c"/><path d="M59 .5H64V13.500H59Z" fill="#605e5c"/><path d="M74 4V10" stroke="#605e5c" stroke-width="2"/>`)}
        <span class="pct">82%</span>${icon(20, 16, svg`<path d="M.8 .8H19.200V15.200H.8Z" stroke="#605e5c" stroke-width="1.500"/><path d="M4 7V4H7M13 4H16V7M16 9V12H13M7 12H4V9" stroke="#605e5c" stroke-width="1.200"/>`)}</div>
      </div>`;
  }
}
